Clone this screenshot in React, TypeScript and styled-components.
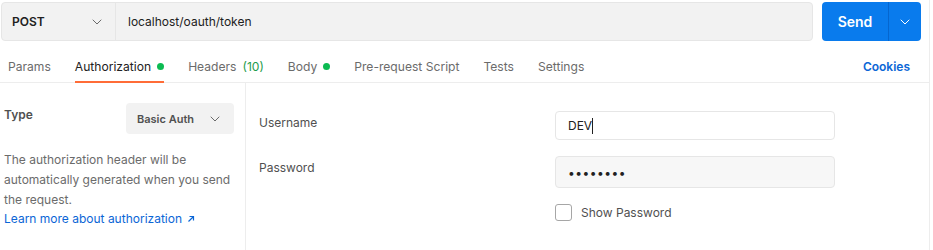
import React from "react"
import styled, { createGlobalStyle } from "styled-components"

const GlobalStyle = createGlobalStyle`
    body {
        margin: 0;
        background: #ffffff;
        font-family: Inter, "Noto Sans", sans-serif;
        -webkit-font-smoothing: antialiased;
    }
`

const tabs = [
    { label: "Params" },
    { label: "Authorization", dot: true, active: true },
    { label: "Headers", count: "(10)" },
    { label: "Body", dot: true },
    { label: "Pre-request Script" },
    { label: "Tests" },
    { label: "Settings" },
]

const Chevron = ({ color = "#6b6b6b" }: { color?: string }) => (
    <svg width="10" height="6" viewBox="0 0 10 6" fill="none">
        <path d="M1 1l4 4 4-4" stroke={color} strokeWidth="1" strokeLinecap="round" strokeLinejoin="round" />
    </svg>
)

const App = () => {
    return (
        <>
            <GlobalStyle />
            <Page>
                <TopBar>
                    <UrlGroup>
                        <MethodSelect>
                            <span>POST</span>
                            <Chevron />
                        </MethodSelect>
                        <UrlText>localhost/oauth/token</UrlText>
                    </UrlGroup>
                    <SendButton>
                        <SendLabel>Send</SendLabel>
                        <SendArrow>
                            <Chevron color="#ffffff" />
                        </SendArrow>
                    </SendButton>
                </TopBar>

                <TabRow>
                    <TabList>
                        {tabs.map(t => (
                            <Tab key={t.label} $active={!!t.active}>
                                {t.label}
                                {t.count && <Count>{t.count}</Count>}
                                {t.dot && <Dot />}
                            </Tab>
                        ))}
                    </TabList>
                    <CookiesLink>Cookies</CookiesLink>
                </TabRow>

                <Body>
                    <SidePanel>
                        <TypeRow>
                            <TypeLabel>Type</TypeLabel>
                            <AuthSelect>
                                <span>Basic Auth</span>
                                <Chevron />
                            </AuthSelect>
                        </TypeRow>
                        <Description>
                            The authorization header will be automatically generated when you send the request.
                        </Description>
                        <LearnLink>
                            Learn more about authorization
                            <svg width="8" height="8" viewBox="0 0 8 8" fill="none">
                                <path d="M1.5 6.5l5-5M2.5 1.5h4v4" stroke="#0b66d6" strokeWidth="1.2" />
                            </svg>
                        </LearnLink>
                    </SidePanel>

                    <FormPanel>
                        <FieldLabel>Username</FieldLabel>
                        <TextField $filled={false} $h={29}>
                            DEV<Caret />
                        </TextField>
                        <FieldLabel>Password</FieldLabel>
                        <TextField $filled={true} $h={32}>
                            <Dots>••••••••</Dots>
                        </TextField>
                        <span />
                        <CheckRow>
                            <CheckBox />
                            <CheckText>Show Password</CheckText>
                        </CheckRow>
                    </FormPanel>
                </Body>
            </Page>
        </>
    )
}

const Page = styled.div`
    width: 929px;
    height: 250px;
    border-right: 1px solid #ededed;
    display: flex;
    flex-direction: column;
`

const TopBar = styled.div`
    display: flex;
    gap: 9px;
    padding: 2px 0 0 1px;
`

const UrlGroup = styled.div`
    width: 812px;
    height: 39px;
    box-sizing: border-box;
    display: flex;
    align-items: stretch;
    background: #f2f2f2;
    border: 1px solid #e6e6e6;
    border-radius: 4px;
`

const MethodSelect = styled.div`
    width: 114px;
    box-sizing: border-box;
    padding: 0 13px 0 10px;
    display: flex;
    align-items: center;
    justify-content: space-between;
    border-right: 1px solid #e6e6e6;
    font-size: 12px;
    font-weight: 600;
    color: #212121;
`

const UrlText = styled.div`
    display: flex;
    align-items: center;
    padding-left: 12px;
    font-size: 12px;
    color: #212121;
`

const SendButton = styled.div`
    width: 99px;
    height: 39px;
    display: flex;
    background: #097bed;
    border-radius: 4px;
    color: #ffffff;
`

const SendLabel = styled.div`
    flex: 1;
    display: flex;
    align-items: center;
    justify-content: center;
    font-size: 14px;
    font-weight: 600;
    border-right: 1px solid #0566cf;
`

const SendArrow = styled.div`
    width: 32px;
    display: flex;
    align-items: center;
    justify-content: center;
`

const TabRow = styled.div`
    margin-top: 9px;
    height: 32px;
    display: flex;
    justify-content: space-between;
    border-bottom: 1px solid #ededed;
`

const TabList = styled.div`
    display: flex;
    gap: 24px;
    padding-left: 8px;
`

const Tab = styled.div<{ $active: boolean }>`
    display: flex;
    align-items: center;
    gap: 4px;
    font-size: 12.1px;
    color: ${p => (p.$active ? "#212121" : "#6b6b6b")};
    border-bottom: 2px solid ${p => (p.$active ? "#ff6c37" : "transparent")};
    margin-bottom: -1px;
    padding-top: 1px;
`

const Count = styled.span`
    margin-left: 2px;
    color: #1e9c4d;
`

const Dot = styled.span`
    width: 7px;
    height: 7px;
    margin-left: 2px;
    border-radius: 50%;
    background: #0cbb52;
`

const CookiesLink = styled.div`
    display: flex;
    align-items: center;
    padding-right: 19px;
    font-size: 12px;
    font-weight: 600;
    color: #0b66d6;
`

const Body = styled.div`
    flex: 1;
    display: flex;
`

const SidePanel = styled.div`
    width: 246px;
    box-sizing: border-box;
    border-right: 1px solid #ededed;
    padding: 20px 11px 0 4px;
`

const TypeRow = styled.div`
    display: flex;
    justify-content: space-between;
    align-items: flex-start;
`

const TypeLabel = styled.div`
    font-size: 12px;
    font-weight: 600;
    color: #505050;
    padding-top: 4px;
`

const AuthSelect = styled.div`
    width: 108px;
    height: 31px;
    box-sizing: border-box;
    padding: 0 14px 0 11px;
    display: flex;
    align-items: center;
    justify-content: space-between;
    background: #f2f2f2;
    border-radius: 4px;
    font-size: 11px;
    font-weight: 600;
    color: #505050;
`

const Description = styled.p`
    margin: 16px 0 0;
    font-size: 12px;
    line-height: 20px;
    color: #6b6b6b;
`

const LearnLink = styled.div`
    display: flex;
    align-items: center;
    gap: 5px;
    font-size: 12px;
    line-height: 18px;
    color: #0b66d6;
`

const FormPanel = styled.div`
    display: grid;
    grid-template-columns: 296px 280px;
    grid-auto-rows: min-content;
    row-gap: 16px;
    padding: 28px 0 0 13px;
`

const FieldLabel = styled.div`
    font-size: 12px;
    color: #505050;
    padding-top: 4px;
`

const TextField = styled.div<{ $filled: boolean; $h: number }>`
    height: ${p => p.$h}px;
    box-sizing: border-box;
    display: flex;
    align-items: center;
    padding-left: 12px;
    background: ${p => (p.$filled ? "#f7f7f7" : "#ffffff")};
    border: 1px solid #e6e6e6;
    border-radius: 4px;
    font-size: 12px;
    color: #212121;
`

const Caret = styled.span`
    width: 1px;
    height: 16px;
    background: #212121;
`

const Dots = styled.span`
    font-size: 12px;
    letter-spacing: 0.5px;
    color: #212121;
`

const CheckRow = styled.div`
    display: flex;
    align-items: center;
    gap: 9px;
`

const CheckBox = styled.span`
    width: 17px;
    height: 17px;
    box-sizing: border-box;
    border: 1px solid #a6a6a6;
    border-radius: 3px;
`

const CheckText = styled.span`
    font-size: 12px;
    color: #505050;
`

export default App
